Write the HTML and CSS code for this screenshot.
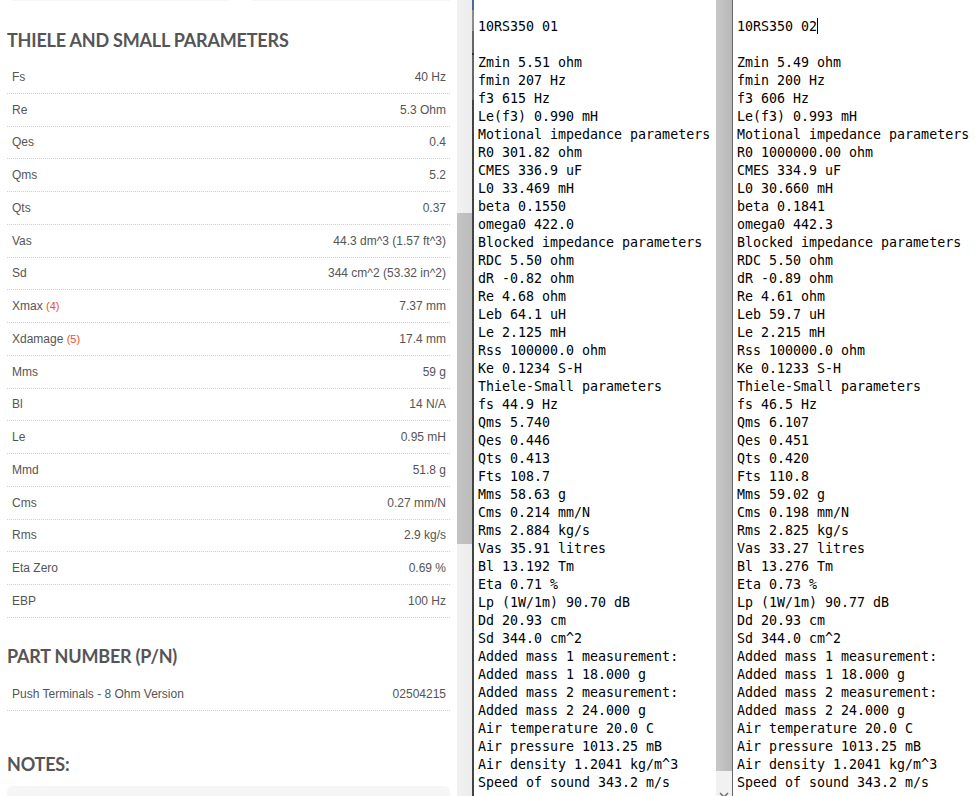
FILE: index.html
```html
<!DOCTYPE html>
<html lang="en">
<head>
<meta charset="utf-8">
<title>10RS350 parameters</title>
<link rel="stylesheet" href="styles.css">
</head>
<body>
<div class="screen">
  <section class="specs">
    <div class="top-shadows"><span class="shadow-a"></span><span class="shadow-b"></span></div>
    <h2 class="title title-first">THIELE AND SMALL PARAMETERS</h2>
    <dl class="table">
      <div class="row"><dt>Fs</dt><dd>40 Hz</dd></div>
      <div class="row"><dt>Re</dt><dd>5.3 Ohm</dd></div>
      <div class="row"><dt>Qes</dt><dd>0.4</dd></div>
      <div class="row"><dt>Qms</dt><dd>5.2</dd></div>
      <div class="row"><dt>Qts</dt><dd>0.37</dd></div>
      <div class="row"><dt>Vas</dt><dd>44.3 dm^3 (1.57 ft^3)</dd></div>
      <div class="row"><dt>Sd</dt><dd>344 cm^2 (53.32 in^2)</dd></div>
      <div class="row"><dt>Xmax <span class="note">(4)</span></dt><dd>7.37 mm</dd></div>
      <div class="row"><dt>Xdamage <span class="note">(5)</span></dt><dd>17.4 mm</dd></div>
      <div class="row"><dt>Mms</dt><dd>59 g</dd></div>
      <div class="row"><dt>Bl</dt><dd>14 N/A</dd></div>
      <div class="row"><dt>Le</dt><dd>0.95 mH</dd></div>
      <div class="row"><dt>Mmd</dt><dd>51.8 g</dd></div>
      <div class="row"><dt>Cms</dt><dd>0.27 mm/N</dd></div>
      <div class="row"><dt>Rms</dt><dd>2.9 kg/s</dd></div>
      <div class="row"><dt>Eta Zero</dt><dd>0.69 %</dd></div>
      <div class="row"><dt>EBP</dt><dd>100 Hz</dd></div>
    </dl>
    <h2 class="title title-part">PART NUMBER (P/N)</h2>
    <dl class="table">
      <div class="row"><dt>Push Terminals - 8 Ohm Version</dt><dd>02504215</dd></div>
    </dl>
    <h2 class="title title-notes">NOTES:</h2>
    <div class="notes-box"></div>
  </section>
  <div class="scrollbar"><div class="track-gap-a"></div><div class="thumb"></div></div>
  <div class="edge edge-a"></div>
  <pre class="log log-a">
10RS350 01

Zmin 5.51 ohm
fmin 207 Hz
f3 615 Hz
Le(f3) 0.990 mH
Motional impedance parameters
R0 301.82 ohm
CMES 336.9 uF
L0 33.469 mH
beta 0.1550
omega0 422.0
Blocked impedance parameters
RDC 5.50 ohm
dR -0.82 ohm
Re 4.68 ohm
Leb 64.1 uH
Le 2.125 mH
Rss 100000.0 ohm
Ke 0.1234 S-H
Thiele-Small parameters
fs 44.9 Hz
Qms 5.740
Qes 0.446
Qts 0.413
Fts 108.7
Mms 58.63 g
Cms 0.214 mm/N
Rms 2.884 kg/s
Vas 35.91 litres
Bl 13.192 Tm
Eta 0.71 %
Lp (1W/1m) 90.70 dB
Dd 20.93 cm
Sd 344.0 cm^2
Added mass 1 measurement:
Added mass 1 18.000 g
Added mass 2 measurement:
Added mass 2 24.000 g
Air temperature 20.0 C
Air pressure 1013.25 mB
Air density 1.2041 kg/m^3
Speed of sound 343.2 m/s</pre>
  <div class="log-scroll"><div class="log-thumb"></div><svg class="arrow" width="10" height="6" viewBox="0 0 10 6"><path d="M1 1l4 4 4-4" fill="none" stroke="#707070" stroke-width="1.5"/></svg></div>
  <div class="edge edge-b"></div>
  <pre class="log log-b">
10RS350 02<span class="caret"></span>

Zmin 5.49 ohm
fmin 200 Hz
f3 606 Hz
Le(f3) 0.993 mH
Motional impedance parameters
R0 1000000.00 ohm
CMES 334.9 uF
L0 30.660 mH
beta 0.1841
omega0 442.3
Blocked impedance parameters
RDC 5.50 ohm
dR -0.89 ohm
Re 4.61 ohm
Leb 59.7 uH
Le 2.215 mH
Rss 100000.0 ohm
Ke 0.1233 S-H
Thiele-Small parameters
fs 46.5 Hz
Qms 6.107
Qes 0.451
Qts 0.420
Fts 110.8
Mms 59.02 g
Cms 0.198 mm/N
Rms 2.825 kg/s
Vas 33.27 litres
Bl 13.276 Tm
Eta 0.73 %
Lp (1W/1m) 90.77 dB
Dd 20.93 cm
Sd 344.0 cm^2
Added mass 1 measurement:
Added mass 1 18.000 g
Added mass 2 measurement:
Added mass 2 24.000 g
Air temperature 20.0 C
Air pressure 1013.25 mB
Air density 1.2041 kg/m^3
Speed of sound 343.2 m/s</pre>
</div>
</body>
</html>
```
FILE: styles.css
```css
* { box-sizing: border-box; }
html, body { margin: 0; padding: 0; background: #fff; overflow: hidden; }
.screen { display: flex; width: 978px; height: 796px; overflow: hidden; }
.specs { width: 457px; flex: none; padding: 0 7px; background: #fff; color: #555; font-family: "Liberation Sans", Arial, sans-serif; }
.top-shadows { display: flex; gap: 23px; height: 1px; padding-left: 5px; }
.shadow-a { width: 220px; background: #f6f6f6; }
.shadow-b { width: 200px; background: #f6f6f6; }
.title { margin: 0; font-family: Lato, "Open Sans", sans-serif; font-size: 18px; letter-spacing: -0.2px; font-weight: 700; line-height: 26px; color: #555; }
.title-first { padding-top: 26px; }
.title-part { margin-top: 25px; }
.title-notes { margin-top: 40px; }
.table { margin: 0; padding-top: 8px; }
.title-part + .table { padding-top: 9px; }
.row { display: flex; justify-content: space-between; align-items: center; height: 32.75px; padding: 0 4px 0 5px; border-bottom: 1px dotted #d0d0d0; font-size: 12px; }
.row dt, .row dd { margin: 0; }
.note { color: #f0501e; font-size: 11px; }
.notes-box { height: 20px; margin-top: 9px; background: #f6f6f6; border-radius: 6px; }
.scrollbar { width: 15px; flex: none; background: linear-gradient(90deg, #f1f1f1, #ececec); display: flex; flex-direction: column; }
.track-gap-a { height: 213px; }
.thumb { height: 331px; background: linear-gradient(90deg, #c4c4c4, #bcbcbc); }
.edge { flex: none; background: #555; }
.edge-a { width: 2px; background: linear-gradient(180deg, #4a6a9c 0 10px, #8c8c8c 10px 31px, #666 31px 53px, #333 53px 55px, #666 55px 100px, #444 100px 796px); }
.edge-b { width: 1px; background: #666; }
.log { margin: 0; height: 796px; flex: none; padding: 18px 0 0 4px; background: #fff; font-family: "DejaVu Sans Mono", monospace; font-size: 13.3px; line-height: 18px; color: #000; overflow: hidden; }
.log-a { width: 242px; }
.log-b { width: 245px; }
.caret { display: inline-block; width: 1px; height: 16px; background: #000; vertical-align: -3px; }
.log-scroll { width: 16px; flex: none; background: #f1f1f1; position: relative; }
.log-thumb { height: 771px; background: linear-gradient(90deg, #c8c8c8, #b8b8b8); }
.arrow { position: absolute; left: 3px; bottom: -2px; }
```
